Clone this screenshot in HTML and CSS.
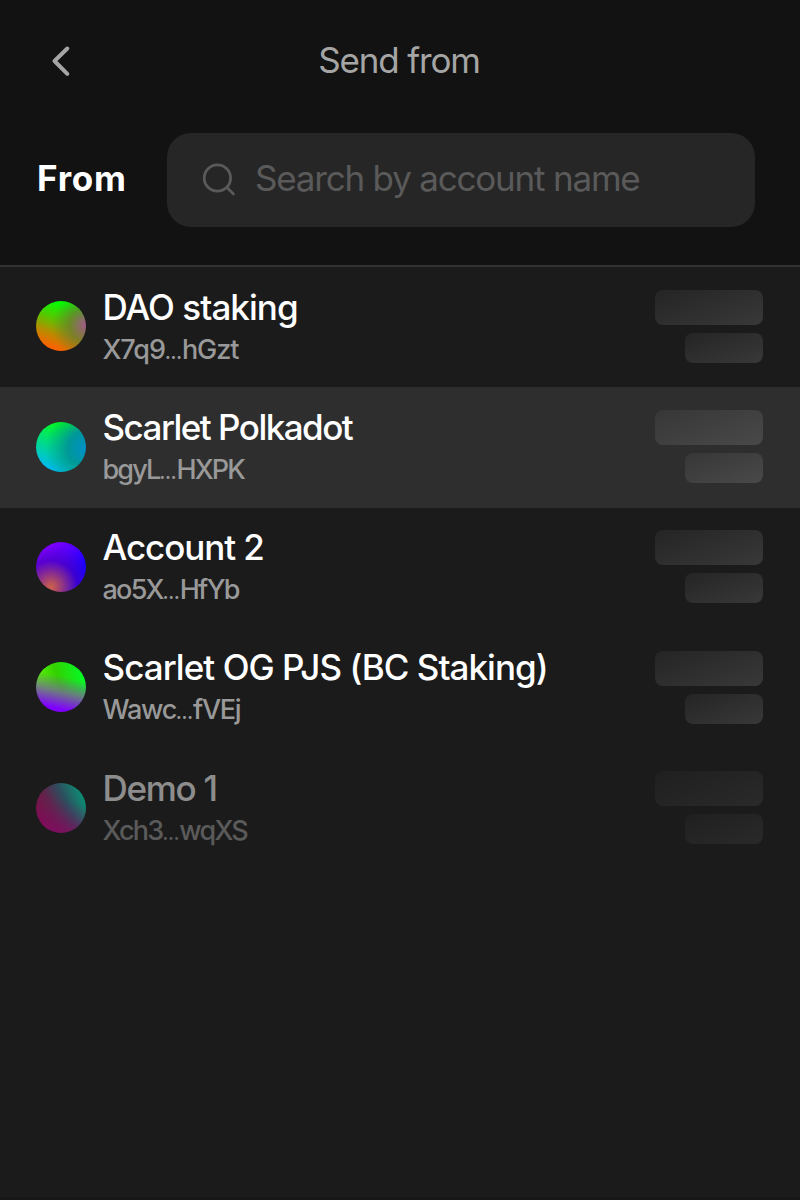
FILE: index.html
```
<!DOCTYPE html>
<html lang="en">
<head>
<meta charset="utf-8">
<title>Send from</title>
<link rel="stylesheet" href="styles.css">
</head>
<body>
<main class="app">
  <header class="topbar">
    <svg class="back" width="24" height="36" viewBox="0 0 24 36" fill="none" stroke="#a5a5a5" stroke-width="4" stroke-linecap="round" stroke-linejoin="round"><path d="M19.3 5.5 6.5 18l12.8 12.8"/></svg>
    <h1 class="title">Send from</h1>
  </header>
  <section class="search-row">
    <span class="from">From</span>
    <div class="search">
      <svg class="lens" width="34" height="34" viewBox="0 0 34 34" fill="none" stroke="#5a5a5a" stroke-width="2.8" stroke-linecap="round"><circle cx="15.4" cy="15" r="13.2"/><path d="m25 24.6 6.4 6.4"/></svg>
      <span class="placeholder">Search by account name</span>
    </div>
  </section>
  <ul class="list">
    <li class="row">
      <span class="avatar dao"></span>
      <div class="info"><span class="name n1">DAO staking</span><span class="addr a1">X7q9<span class="dots">…</span>hGzt</span></div>
      <div class="balance"><i class="bar wide"></i><i class="bar"></i></div>
    </li>
    <li class="row active">
      <span class="avatar polka"></span>
      <div class="info"><span class="name n2">Scarlet Polkadot</span><span class="addr a2">bgyL<span class="dots">…</span>HXPK</span></div>
      <div class="balance"><i class="bar wide"></i><i class="bar"></i></div>
    </li>
    <li class="row">
      <span class="avatar acc"></span>
      <div class="info"><span class="name n3">Account 2</span><span class="addr a3">ao5X<span class="dots">…</span>HfYb</span></div>
      <div class="balance"><i class="bar wide"></i><i class="bar"></i></div>
    </li>
    <li class="row">
      <span class="avatar og"></span>
      <div class="info"><span class="name n4">Scarlet OG PJS (BC Staking)</span><span class="addr a4">Wawc<span class="dots">…</span>fVEj</span></div>
      <div class="balance"><i class="bar wide"></i><i class="bar"></i></div>
    </li>
    <li class="row disabled">
      <span class="avatar demo"></span>
      <div class="info"><span class="name n5">Demo 1</span><span class="addr a5">Xch3<span class="dots">…</span>wqXS</span></div>
      <div class="balance"><i class="bar wide"></i><i class="bar"></i></div>
    </li>
  </ul>
</main>
</body>
</html>
```
FILE: styles.css
```
* { box-sizing: border-box; }
body { margin: 0; background: #1b1b1b; font-family: Inter, "Liberation Sans", sans-serif; color: #fff; }
.app { display: flex; flex-direction: column; height: 1200px; background: #1b1b1b; border-bottom: 3px solid #171717; }
.topbar { display: grid; grid-template-columns: 80px 1fr 80px; align-items: center; height: 121px; background: #121212; }
.back { margin-left: 48px; }
.title { margin: 0; padding: 0 2px 2px 0; text-align: center; font-size: 35px; font-weight: 400; line-height: 42px; color: #a5a5a5; white-space: nowrap; letter-spacing: -1.15px; }
.search-row { display: flex; align-items: flex-start; height: 146px; padding: 11.5px 45px 0 37px; background: #121212; border-bottom: 2px solid #333; }
.from { width: 130px; font-size: 35px; font-weight: 650; line-height: 91px; letter-spacing: .8px; }
.search { display: flex; align-items: center; flex: 1; height: 94.5px; border-radius: 24px; background: #262626; padding-left: 35px; gap: 19px; }
.placeholder { padding-bottom: 3px; font-size: 35px; line-height: 42px; color: #5a5a5a; white-space: nowrap; letter-spacing: -1.2px; }
.list { list-style: none; margin: 0; padding: 0; }
.row { display: flex; align-items: center; height: 120.3px; padding: 0 37px 1.6px 36px; }
.active { background: #2e2e2e; }
.disabled { opacity: 0.5; }
.avatar { width: 50px; height: 50px; border-radius: 50%; flex: none; }
.dao { background: radial-gradient(circle at 100% 48%, #a2588a 0, rgba(115,115,50,.7) 30%, rgba(80,150,20,0) 60%), linear-gradient(200deg, #00ff00 16%, #55c800 42%, #b88c00 65%, #ff6000 88%); }
.polka { background: radial-gradient(circle at 100% 53%, #0090cc 0, #009898 32%, rgba(0,165,100,0) 72%), linear-gradient(203deg, #00ff10 14%, #00df7c 50%, #00b5ff 92%); }
.acc { background: radial-gradient(circle at 30% 90%, #cc604c 0, #b34d62 10%, rgba(76,0,190,.7) 46%, rgba(50,0,230,0) 75%), linear-gradient(135deg, #8500ff 15%, #5000ff 45%, #1500ff 72%); }
.og { background: linear-gradient(193deg, transparent 32%, rgba(115,110,145,.85) 58%, #8000ff 86%), linear-gradient(75deg, #60ff00 10%, #34d000 48%, #00ff2b 95%); }
.demo { background: linear-gradient(20deg, rgba(225,0,165,.95) 10%, rgba(200,20,160,.3) 45%, transparent 65%), linear-gradient(65deg, #e00060 12%, #a0307c 38%, #4080a0 60%, #00ffcb 88%); }
.info { display: flex; flex-direction: column; margin-left: 16.5px; padding-top: 2.4px; white-space: nowrap; }
.name { font-size: 35px; font-weight: 500; line-height: 43px; letter-spacing: -0.95px; }
.n2 { letter-spacing: -1.52px; }
.n3 { letter-spacing: -1.07px; }
.n5 { letter-spacing: -1.3px; }
.addr { font-size: 27px; font-weight: 500; line-height: 41px; color: #999; letter-spacing: -1.05px; }
.a2 { letter-spacing: -1.85px; }
.a3, .a5 { letter-spacing: -1.75px; }
.a4 { letter-spacing: -1.25px; }
.dots { font-size: 16px; font-weight: 800; line-height: 1; letter-spacing: 0; }
.balance { display: flex; flex-direction: column; align-items: flex-end; gap: 8px; margin-left: auto; }
.bar { width: 78px; height: 30px; border-radius: 8px; background: linear-gradient(160deg, rgba(255,255,255,.045), rgba(255,255,255,.13)); }
.wide { width: 108px; height: 35px; }
```
